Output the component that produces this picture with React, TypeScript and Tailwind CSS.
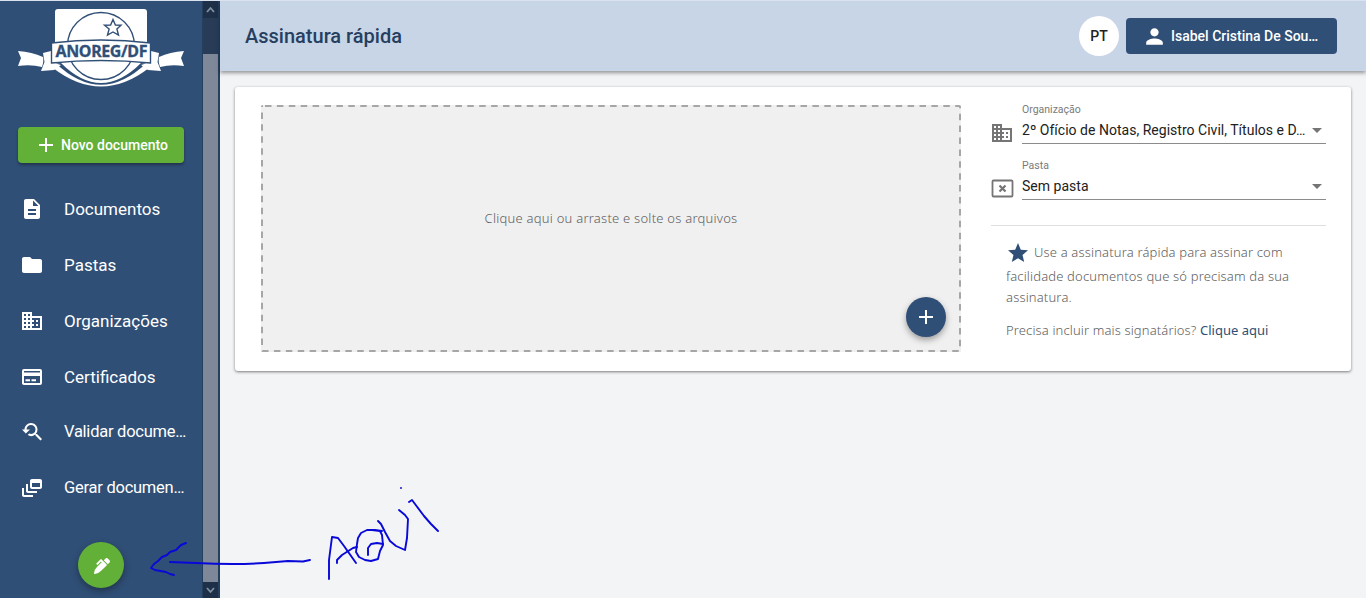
import type { ReactNode } from "react";
import {
  MdAdd,
  MdArrowDropDown,
  MdDescription,
  MdDomain,
  MdDynamicFeed,
  MdFolder,
  MdPerson,
  MdStar,
  MdYoutubeSearchedFor,
} from "react-icons/md";
import { FaPenAlt } from "react-icons/fa";

function Logo() {
  return (
    <svg
      width="168"
      height="82"
      viewBox="17 7 168 82"
      className="block"
      role="img"
      aria-label="ANOREG/DF"
    >
      <path d="M58 9H144Q147 9 147 12V45H55V12Q55 9 58 9Z" fill="#fff" />
      <path d="M53 68Q101 105 149 68L147 60H55Z" fill="#fff" />
      <path d="M55 44H147V63H55Z" fill="#fff" />
      <circle cx="101" cy="46" r="33.5" fill="#fff" stroke="#304f76" strokeWidth="1.3" />
      <path d="M56 63.500L61 63Q101 103 141 63L146 63.500Q101 106 56 63.500Z" fill="#304f76" />
      <path d="M18 51Q32 52 43 57Q44 61 42 67Q31 64 18 66L21 58Z" fill="#fff" />
      <path d="M184 51Q170 52 159 57Q158 61 160 67Q171 64 184 66L181 58Z" fill="#fff" />
      <path d="M43 53L51 51V62L61 65L54 70L41 71L44.500 62Z" fill="#fff" />
      <path d="M159 53L151 51V62L141 65L148 70L161 71L157.500 62Z" fill="#fff" />
      <path
        d="M51.500 43Q101 37 150.500 43V63Q101 58 51.500 63Z"
        fill="#fff"
        stroke="#304f76"
        strokeWidth="1.4"
      />
      <path
        d="M113 19.500L115.400 25L121 25.200L116.900 29L118.500 35L113 32L107.500 35L109.100 29L104.500 25.200L110.600 25Z"
        fill="#fff"
        stroke="#304f76"
        strokeWidth="1.4"
      />
      <text
        x="101.500"
        y="56.500"
        textAnchor="middle"
        textLength="92"
        lengthAdjust="spacing"
        fill="#304f76"
        stroke="#304f76"
        strokeWidth="0.300"
        fontSize="16"
        fontWeight="700"
        fontFamily="Noto Sans, sans-serif"
      >
        ANOREG/DF
      </text>
    </svg>
  );
}

function CardIcon() {
  return (
    <svg width="24" height="24" viewBox="0 0 24 24" fill="currentColor">
      <path d="M20 4H4a2 2 0 0 0-2 2v12c0 1.100.9 2 2 2h16a2 2 0 0 0 2-2V6a2 2 0 0 0-2-2Zm0 14H4v-7h16v7Zm0-10.500H4V6h16v1.500Z" />
      <path d="M5.500 14.300h4.500v2H5.500zM11.500 14.300h4.500v2h-4.500z" />
    </svg>
  );
}

function NoFolderIcon() {
  return (
    <svg width="24" height="20" viewBox="0 0 24 20" fill="none" stroke="#757575" className="mt-0.5">
      <rect x="1.500" y="1.500" width="20" height="16" rx="1" strokeWidth="1.800" />
      <path d="M8.500 6.500l6 6M14.500 6.500l-6 6" strokeWidth="2.200" />
    </svg>
  );
}

const menu: { label: string; icon: ReactNode; size: string }[] = [
  { label: "Documentos", icon: <MdDescription size={24} />, size: "text-[17px]" },
  { label: "Pastas", icon: <MdFolder size={24} />, size: "text-[17px]" },
  { label: "Organizações", icon: <MdDomain size={24} />, size: "text-[17px]" },
  { label: "Certificados", icon: <CardIcon />, size: "text-[17px]" },
  {
    label: "Validar docume…",
    icon: <MdYoutubeSearchedFor size={24} />,
    size: "text-[16.500px] tracking-[-0.250px]",
  },
  {
    label: "Gerar documen…",
    icon: <MdDynamicFeed size={24} />,
    size: "text-[16.500px] tracking-[-0.250px]",
  },
];

function Sidebar() {
  return (
    <aside className="flex w-[202px] shrink-0 flex-col bg-[#304f76] text-white">
      <div className="pl-[17px] pt-[6px]">
        <Logo />
      </div>
      <button className="ml-[18px] mt-[38px] flex h-9 w-[166px] shrink-0 items-center rounded bg-[#62b038] pl-4 text-sm font-medium shadow-[0_2px_3px_rgba(0,0,0,0.35)]">
        <MdAdd size={24} />
        <span className="ml-[3px] whitespace-nowrap">Novo documento</span>
      </button>
      <nav className="mt-[18px] flex flex-col">
        {menu.map((item) => (
          <a key={item.label} className="flex h-[55.875px] items-center pl-5">
            <span className="shrink-0">{item.icon}</span>
            <span className={`ml-5 whitespace-nowrap leading-6 ${item.size}`}>{item.label}</span>
          </a>
        ))}
      </nav>
      <button className="ml-[78px] mt-[26px] flex size-[46px] shrink-0 items-center justify-center rounded-full bg-[#62b038] shadow-[0_3px_7px_rgba(0,0,0,0.35)]">
        <FaPenAlt size={16} className="mt-px ml-px" />
      </button>
    </aside>
  );
}

function Scrollbar() {
  return (
    <div className="flex w-[18px] shrink-0 flex-col border-l border-r-2 border-[#24405f] bg-[#7f8899]">
      <div className="flex h-[17px] items-center justify-center bg-[#1e3048]">
        <svg width="9" height="7" viewBox="0 0 9 7" fill="none" stroke="#8290a3" strokeWidth="1.800">
          <path d="M1 6L4.500 2L8 6" />
        </svg>
      </div>
      <div className="h-9 bg-[#283b57]" />
      <div className="flex-1" />
      <div className="flex h-4 items-center justify-center bg-[#1e3048]">
        <svg width="9" height="7" viewBox="0 0 9 7" fill="none" stroke="#8290a3" strokeWidth="1.800">
          <path d="M1 1L4.500 5L8 1" />
        </svg>
      </div>
    </div>
  );
}

function Header() {
  return (
    <header className="z-10 flex h-[70px] shrink-0 items-center bg-[#c8d5e6] pl-[25px] pr-[29px] shadow-[0_2px_4px_rgba(0,0,0,0.4)]">
      <h1 className="flex-1 text-xl font-medium text-[#263f60]">Assinatura rápida</h1>
      <button className="flex size-10 items-center justify-center rounded-full bg-white text-sm font-medium text-[#222]">
        PT
      </button>
      <button className="ml-[7px] flex h-9 w-[211px] items-center rounded bg-[#304f76] pl-4 pr-4 text-sm font-medium text-white">
        <MdPerson size={25} className="shrink-0" />
        <span className="ml-1 whitespace-nowrap">Isabel Cristina De Sou…</span>
      </button>
    </header>
  );
}

function Field({ icon, label, value }: { icon: ReactNode; label: string; value: string }) {
  return (
    <div className="flex h-14">
      <div className="w-[31px] shrink-0 pt-[19px] text-[#757575]">{icon}</div>
      <div className="h-[42px] min-w-0 flex-1 border-b border-[#8b8b8b] pt-px">
        <div className="text-[10.500px] leading-[14px] text-[#7a7a7a]">{label}</div>
        <div className="flex h-[25px] items-center">
          <span className="flex-1 whitespace-nowrap text-sm tracking-[0.020px] text-[#212121]">{value}</span>
          <MdArrowDropDown size={24} className="-mr-[3px] shrink-0 text-[#757575]" />
        </div>
      </div>
    </div>
  );
}

function Annotation() {
  return (
    <svg
      className="pointer-events-none absolute left-[140px] top-[479px] z-20"
      width="310"
      height="118"
      viewBox="140 480 310 118"
      fill="none"
      stroke="#0808d8"
      strokeWidth="1.900"
      strokeLinecap="round"
      strokeLinejoin="round"
    >
      <path d="M186 543L181 545L176 550L170 552L167 555L162 557L158 561L154 564L151 568L155 570L166 572L170 574L174 575" />
      <path d="M170 562L196 563Q235 565 264 563L288 561L303 561.500L310 560" />
      <path d="M329 579L329 560L332 537L338 538L344 546L356 563" />
      <path d="M337 563L337 560L342 555L353 548L357 547" />
      <path d="M382 531L375 530L367 530L361 533L358 538L357 544L356 552L359 557L365 560L371 561L378 559L380 551L383 545L382 535L380 531L372 530" />
      <path d="M368 555L368 548L371 544L377 543L383 544" />
      <path d="M378 521L381 524L385 532L390 541L396 546L405 550L407 538L408 519L405 515L399 510" />
      <path d="M409 502L412 500L415 504L424 516L431 524L438 531" />
      <path d="M401 488L401 488" />
    </svg>
  );
}

export default function App() {
  return (
    <div className="relative h-[598px] w-[1366px] overflow-hidden border-t border-[#d8e3ef] bg-[#f3f4f6] font-['Roboto',sans-serif]">
      <div className="flex h-full">
        <Sidebar />
        <Scrollbar />
        <div className="flex min-w-0 flex-1 flex-col">
          <Header />
          <main className="pl-[15px] pr-[15px] pt-4">
            <section className="flex h-[284px] rounded-[3px] bg-white pl-[26px] pr-[25px] pt-[18px] shadow-[0_1px_3px_rgba(0,0,0,0.5)]">
              <div className="relative flex h-[247px] w-[700px] shrink-0 justify-center bg-[#f0f0f0] pt-[103px]">
                <svg className="pointer-events-none absolute inset-0" width="700" height="247" fill="none">
                  <rect
                    x="1"
                    y="1"
                    width="698"
                    height="245"
                    rx="1"
                    stroke="#a6a6a6"
                    strokeWidth="2"
                    strokeDasharray="6.500 5.400"
                    strokeDashoffset="-2"
                  />
                </svg>
                <p className="font-['Noto_Sans','Open_Sans',sans-serif] text-[13px] font-light leading-5 tracking-[0.240px] text-[#606060]">
                  Clique aqui ou arraste e solte os arquivos
                </p>
                <button className="absolute bottom-[15px] right-[15px] flex size-10 items-center justify-center rounded-full bg-[#304f76] text-white shadow-[0_3px_6px_rgba(0,0,0,0.35)]">
                  <MdAdd size={24} />
                </button>
              </div>
              <div className="-mt-[3px] ml-[30px] flex min-w-0 flex-1 flex-col">
                <Field
                  icon={<MdDomain size={24} className="-ml-px" />}
                  label="Organização"
                  value="2º Ofício de Notas, Registro Civil, Títulos e D…"
                />
                <Field icon={<NoFolderIcon />} label="Pasta" value="Sem pasta" />
                <div className="mt-[11px] border-t border-[#dedede]" />
                <div className="pl-[15px] pt-4 font-['Noto_Sans','Open_Sans',sans-serif] text-[13px] font-light tracking-[0.160px] text-[#606060]">
                  <p className="whitespace-nowrap leading-[21px]">
                    <MdStar
                      size={24}
                      className="relative -top-px mr-1 inline-block align-middle text-[#304f76]"
                    />
                    Use a assinatura rápida para assinar com
                    <br />
                    facilidade documentos que só precisam da sua
                    <br />
                    assinatura.
                  </p>
                  <p className="mt-3 whitespace-nowrap leading-[21px] tracking-[0.130px]">
                    Precisa incluir mais signatários?{" "}
                    <a className="font-normal tracking-normal text-[#304f76]">Clique aqui</a>
                  </p>
                </div>
              </div>
            </section>
          </main>
        </div>
      </div>
      <Annotation />
    </div>
  );
}
